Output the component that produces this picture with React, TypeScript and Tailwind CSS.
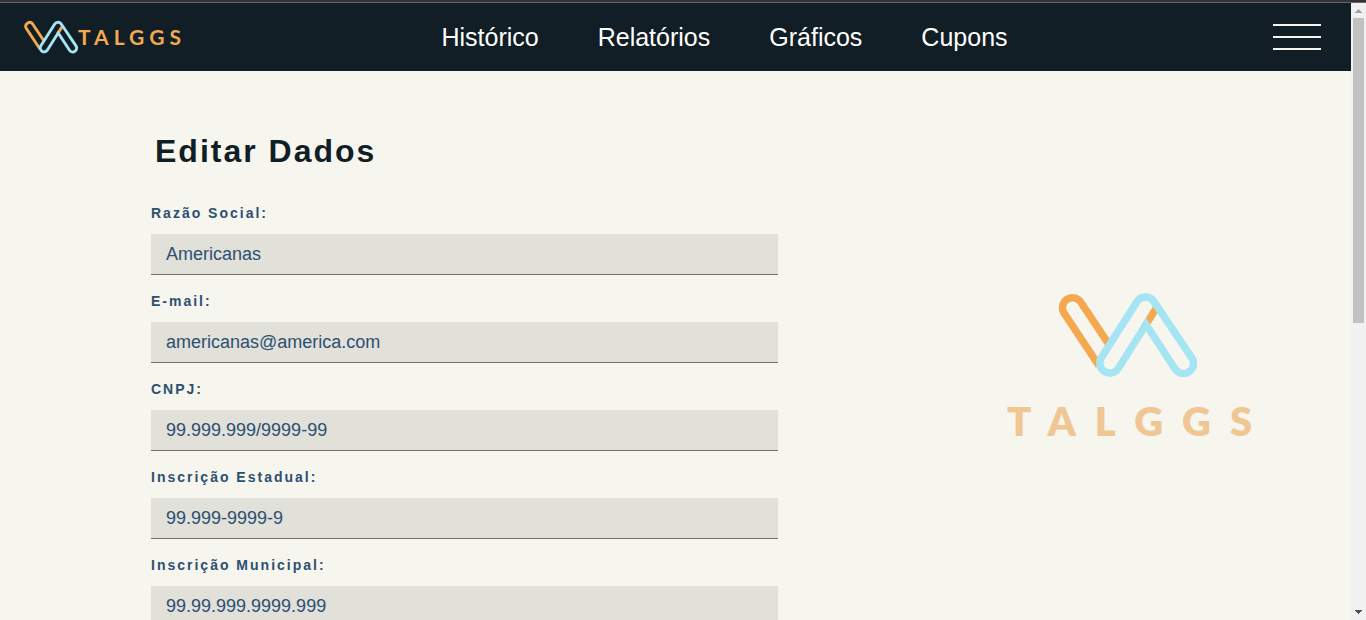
import React from "react";

const links = ["Histórico", "Relatórios", "Gráficos", "Cupons"];

const fields = [
  { id: "razao-social", label: "Razão Social:", type: "text", value: "Americanas" },
  { id: "email", label: "E-mail:", type: "email", value: "americanas@america.com" },
  { id: "cnpj", label: "CNPJ:", type: "text", value: "99.999.999/9999-99" },
  { id: "inscricao-estadual", label: "Inscrição Estadual:", type: "text", value: "99.999-9999-9" },
  { id: "inscricao-municipal", label: "Inscrição Municipal:", type: "text", value: "99.99.999.9999.999" },
];

function Mark({ className }: { className: string }) {
  return (
    <svg viewBox="0 0 139 84" fill="none" strokeWidth="7.4" className={className} aria-hidden="true">
      <path d="M41 72.7 5.7 19.5A10 10 0 0 1 22.3 8.5L51.5 52.4" stroke="#f4a950" />
      <path d="M86 34.6 99 14" stroke="#f4a950" />
      <path
        d="M43.1 65.1 79.1 8.6A10 10 0 0 1 95.8 8.4L133.8 64.9A10 10 0 0 1 117.2 76.1L88 31.5 59.9 75.9A10 10 0 0 1 43.1 65.1Z"
        stroke="#a5e4f2"
      />
    </svg>
  );
}

function Header() {
  return (
    <header className="flex h-[68px] items-center justify-between bg-[#111e25] pr-[30px] pl-6">
      <a href="#" className="flex w-38 items-center">
        <Mark className="h-[34px] w-[54px] shrink-0" />
        <span className="font-[Lato,sans-serif] text-[21px] leading-6 font-bold tracking-[5px] text-[#f4a950]">
          TALGGS
        </span>
      </a>
      <nav className="flex gap-[59px]">
        {links.map((link) => (
          <a key={link} href="#" className="text-[25px] leading-7 text-white">
            {link}
          </a>
        ))}
      </nav>
      <button type="button" aria-label="Menu" className="flex w-12 flex-col gap-2.5">
        <span className="h-0.5 w-full bg-[#f6f5ee]" />
        <span className="h-0.5 w-full bg-[#f6f5ee]" />
        <span className="h-0.5 w-full bg-[#f6f5ee]" />
      </button>
    </header>
  );
}

function Scrollbar() {
  return (
    <div className="flex w-[15px] shrink-0 flex-col bg-[#f1f1f1]" aria-hidden="true">
      <svg viewBox="0 0 15 15" className="h-[15px] w-[15px] shrink-0" shapeRendering="crispEdges">
        <path d="M7 6h1v1h1v1h1v1h1v1H4V9h1V8h1V7h1z" fill="#a3a3a3" />
      </svg>
      <div className="flex-1 px-0.5">
        <div className="h-[52%] bg-[#c1c1c1]" />
      </div>
      <svg viewBox="0 0 15 15" className="h-[15px] w-[15px] shrink-0" shapeRendering="crispEdges">
        <path d="M4 5h7v1h-1v1H9v1H8v1H7V8H6V7H5V6H4z" fill="#505050" />
      </svg>
    </div>
  );
}

export default function App() {
  return (
    <div className="flex h-screen flex-col bg-[#f6f5ee] font-['Liberation_Sans',Arial,sans-serif]">
      <div className="h-[3px] shrink-0 border-b border-[#68666c] bg-[#323237]" />
      <div className="flex min-h-0 flex-1">
        <div className="min-w-0 flex-1 overflow-y-auto [scrollbar-width:none]">
          <Header />
          <main className="grid grid-cols-[627fr_573fr] items-start pl-[151px]">
            <form className="pt-[62px] pb-10">
              <h1 className="mb-9 pl-1 text-[32px] leading-9 font-bold tracking-[2px] text-[#111e25]">
                Editar Dados
              </h1>
              <div className="flex flex-col gap-[18px]">
                {fields.map((field) => (
                  <div key={field.id} className="flex flex-col gap-[13px]">
                    <label htmlFor={field.id} className="text-sm leading-4 font-bold tracking-[2px] text-[#2c5071]">
                      {field.label}
                    </label>
                    <input
                      id={field.id}
                      type={field.type}
                      defaultValue={field.value}
                      className="h-[41px] w-full border-b border-[#6f6f6f] bg-[#e1e0d9] px-[15px] text-lg text-[#2c5071] outline-none"
                    />
                  </div>
                ))}
              </div>
            </form>
            <div className="flex flex-col items-center pt-[222px] pl-[125px]">
              <Mark className="h-[84px] w-[139px]" />
              <p className="mt-5 pl-6 font-[Lato,sans-serif] text-[40px] leading-12 font-extrabold tracking-[19px] text-[#f0c794]">
                TALGGS
              </p>
            </div>
          </main>
        </div>
        <Scrollbar />
      </div>
    </div>
  );
}
